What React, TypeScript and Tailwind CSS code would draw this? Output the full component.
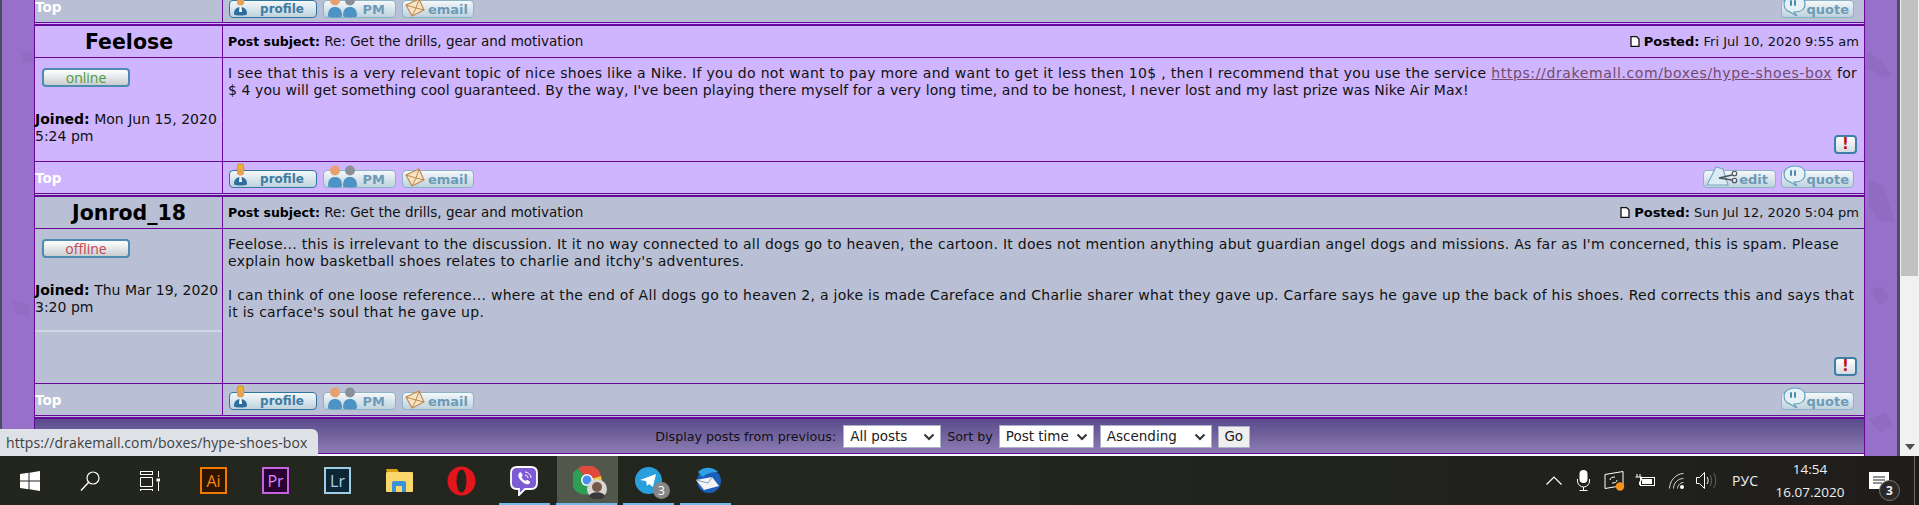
import React from "react";

const BODY = "font-['DejaVu_Sans',sans-serif]";

function ProfileIcon() {
  return (
    <svg width="22" height="25" viewBox="0 0 22 25">
      <path d="M7 1h5l1 5-1 5H7L6 6z" fill="#f0b030" stroke="#b88a20" strokeWidth="0.7" />
      <circle cx="9.5" cy="9" r="3.6" fill="#e9a050" />
      <path d="M3 21c0-5 3-7 6.5-7s6.500 2 6.500 7c0 2-13 2-13 0z" fill="#2f6e9e" />
      <path d="M8.500 14h2l.5 5h-3z" fill="#fff" />
    </svg>
  );
}

function PmIcon() {
  return (
    <svg width="32" height="23" viewBox="0 0 32 23">
      <circle cx="8" cy="5.500" r="5" fill="#e8a070" />
      <path d="M1 21c0-7 3-9 7-9s7 2 7 9c0 2-14 2-14 0z" fill="#4f93c4" />
      <circle cx="23" cy="5.500" r="5" fill="#8a8f98" />
      <path d="M16 21c0-7 3-9 7-9s7 2 7 9c0 2-14 2-14 0z" fill="#4f93c4" />
    </svg>
  );
}

function EmailIcon() {
  return (
    <svg width="22" height="20" viewBox="0 0 22 20">
      <path d="M2 7 15 1l5 11-12 6z" fill="#f6e4c4" stroke="#c08a50" strokeWidth="1.200" />
      <path d="M2 7l10 3 3-9M8 18l4-8 8 2" fill="none" stroke="#c08a50" strokeWidth="1" />
    </svg>
  );
}

function EditIcon() {
  return (
    <svg width="34" height="23" viewBox="0 0 34 23">
      <path d="M1 20 10 2l7 2 5 16z" fill="#dcebf4" stroke="#7ba8c4" strokeWidth="1.200" />
      <path d="M13 13l13-3M13 13l13 2" stroke="#4c5560" strokeWidth="1.400" />
      <circle cx="28.500" cy="8.500" r="2.300" fill="none" stroke="#4c5560" strokeWidth="1.100" />
      <circle cx="28.500" cy="15.500" r="2.300" fill="none" stroke="#4c5560" strokeWidth="1.100" />
    </svg>
  );
}

function QuoteIcon() {
  return (
    <svg width="24" height="23" viewBox="0 0 24 23">
      <path d="M12 1c6 0 10 3 10 8s-4 8-10 8h-1l3 4-7-4c-3-1-6-3-6-8s5-8 11-8z" fill="#e6f1f6" stroke="#5f9ebd" strokeWidth="1.200" />
      <path d="M8 6v4M12 6v4" stroke="#3d7fa5" strokeWidth="1.800" strokeLinecap="round" />
    </svg>
  );
}

function SkinButton({ w, label, icon, left, strong, textClass }: { w: string; label: string; icon: React.ReactNode; left: string; strong?: boolean; textClass: string }) {
  return (
    <span className={`relative flex h-[18px] items-center justify-end rounded-[4px] border bg-gradient-to-b from-[#f4f8fa] to-[#bed3de] ${w} ${strong ? "border-[#31759f]" : "border-[#8db2c6]"}`}>
      <span className={`font-['DejaVu_Sans',sans-serif] font-bold leading-none ${textClass} ${strong ? "text-[12px] text-[#3e7ba1]" : "text-[13px] text-[#6d9ab6]"}`}>{label}</span>
      <span className={`absolute bottom-[-1px] flex ${left}`}>{icon}</span>
    </span>
  );
}

function LeftButtons() {
  return (
    <div className="flex items-end gap-[6px]">
      <SkinButton w="w-[88px]" label="profile" icon={<ProfileIcon />} left="left-[1px]" strong textClass="pr-[12px]" />
      <SkinButton w="w-[73px]" label="PM" icon={<PmIcon />} left="left-[3px]" textClass="pr-[10px]" />
      <SkinButton w="w-[72px]" label="email" icon={<EmailIcon />} left="left-[1px]" textClass="pr-[5px]" />
    </div>
  );
}

function FooterRow({ bg, edit, h, pad, topPad }: { bg: string; edit?: boolean; h: string; pad: string; topPad: string }) {
  return (
    <div className={`grid grid-cols-[188px_1fr] border-b border-[#68059b] ${bg} ${h}`}>
      <div className="flex items-end border-r border-[#68059b]">
        <span className={`${BODY} text-[13.5px] font-bold leading-none text-white ${topPad}`}>Top</span>
      </div>
      <div className={`flex items-end justify-between pl-[6px] pr-[10px] ${pad}`}>
        <LeftButtons />
        <div className="flex items-end gap-[5px]">
          {edit && <SkinButton w="w-[73px]" label="edit" icon={<EditIcon />} left="left-[2px]" textClass="pr-[7px]" />}
          <SkinButton w="w-[73px]" label="quote" icon={<QuoteIcon />} left="left-[1px]" textClass="pr-[4px]" />
        </div>
      </div>
    </div>
  );
}

function Badge({ label, color }: { label: string; color: string }) {
  return (
    <span className="flex h-[19px] w-[88px] items-center justify-center rounded-[4px] border-2 border-[#4d8bb3] bg-gradient-to-b from-[#ffffff] to-[#c9cdd0]">
      <span className={`font-['Open_Sans',sans-serif] text-[14px] leading-none ${color}`}>{label}</span>
    </span>
  );
}

function PostIcon() {
  return (
    <svg width="10" height="11" viewBox="0 0 10 11" className="mr-[4px]">
      <path d="M1 .5h5.500L9 3v7.500H1z" fill="#fff" stroke="#111" strokeWidth="1.300" />
    </svg>
  );
}

function Alert() {
  return (
    <span className="flex h-[19px] w-[23px] items-center justify-center rounded-[4px] border-2 border-[#3f7fa6] bg-gradient-to-b from-[#ffffff] to-[#d2dce2]">
      <span className="font-['DejaVu_Sans',sans-serif] text-[15px] font-bold leading-none text-[#c4120f]">!</span>
    </span>
  );
}

function Post({
  name, bg, badge, badgeColor, joined, time, posted, rule, bodyH, edit, children,
}: {
  name: string; bg: string; badge: string; badgeColor: string; joined: string; time: string; posted: string; rule?: boolean; bodyH: string; edit?: boolean; children: React.ReactNode;
}) {
  return (
    <div className={bg}>
      <div className="h-[1px]" />
      <div className="h-[2px] bg-[#68059b]" />
      <div className="grid h-[32px] grid-cols-[188px_1fr] border-b border-[#68059b]">
        <div className="flex items-center justify-center border-r border-[#68059b] pl-[1px] pt-[1px]">
          <span className={`${BODY} text-[20.5px] font-bold leading-none text-black`}>{name}</span>
        </div>
        <div className={`${BODY} flex min-w-0 items-center justify-between pl-[5px] pr-[5px] text-[13px] text-[#111]`}>
          <span className="text-[13.5px]"><b className="text-[12.5px] text-black">Post subject:</b> Re: Get the drills, gear and motivation</span>
          <span className="flex items-center">
            <PostIcon />
            <span><b className="text-black">Posted:</b> {posted}</span>
          </span>
        </div>
      </div>
      <div className={`grid grid-cols-[188px_1fr] border-b border-[#68059b] ${bodyH}`}>
        <div className="relative border-r border-[#68059b] pt-[10px]">
          <div className="pl-[7px]"><Badge label={badge} color={badgeColor} /></div>
          <p className={`${BODY} mt-[24px] whitespace-nowrap text-[14px] leading-[17px] text-[#111]`}>
            <b className="text-black">Joined:</b> {joined}<br />{time}
          </p>
          {rule && <div className="mt-[14px] h-[2px] bg-[#d0d5e2]" />}
        </div>
        <div className="flex min-w-0 flex-col justify-between pb-[7px] pl-[5px] pr-[7px] pt-[7px]">
          <div className={`${BODY} whitespace-nowrap text-[14px] leading-[17px] text-[#111]`}>{children}</div>
          <div className="flex justify-end"><Alert /></div>
        </div>
      </div>
      <FooterRow bg="" edit={edit} h="h-[32px]" pad="pb-[5px]" topPad="pb-[8px]" />
    </div>
  );
}

function SelectBox({ label, w }: { label: string; w: string }) {
  return (
    <span className={`flex h-[23px] items-center justify-between border border-[#a9b2c6] bg-white pl-[6px] pr-[5px] font-['DejaVu_Sans',sans-serif] text-[13.5px] text-[#222] ${w}`}>
      {label}
      <svg width="12" height="8" viewBox="0 0 12 8"><path d="M1.500 1.500 6 6l4.500-4.500" fill="none" stroke="#333" strokeWidth="2" /></svg>
    </span>
  );
}

function Blobs({ seed }: { seed: number }) {
  return (
    <svg width="32" height="456" viewBox="0 0 32 456" className="absolute left-0 top-0">
      {seed === 0 ? (
        <g fill="#8d66bb" opacity="0.55">
          <path d="M2 52l14 8 10 14-6 4-12-8-8 0z" />
          <path d="M4 180l14 6 12 36-16-2-10-14z" />
          <path d="M6 290l10-4 8 12-10 8z" />
          <path d="M4 420l16-8 8 12-12 8z" />
        </g>
      ) : (
        <g fill="#8d66bb" opacity="0.4">
          <path d="M18 50l14 4v10l-10-2z" />
          <path d="M10 300l16 4 2 12-14-2z" />
        </g>
      )}
    </svg>
  );
}

function Taskbar() {
  return (
    <div className="relative flex h-[49px] items-center bg-gradient-to-r from-[#23261d] via-[#22271f] to-[#1f1d1c] pl-[20px] font-['Open_Sans',sans-serif] text-white">
      <svg width="20" height="20" viewBox="0 0 20 20"><path d="M0 3l8.500-1.200V9.500H0zM9.500 1.700 20 0v9.500H9.500zM0 10.500h8.500v7.700L0 17zM9.500 10.500H20V20L9.500 18.300z" fill="#fff" /></svg>
      <svg width="20" height="20" viewBox="0 0 20 20" className="ml-[40px]"><circle cx="13" cy="7" r="6" fill="none" stroke="#fff" strokeWidth="1.200" /><path d="M8.500 11.500 1 19.500" stroke="#fff" strokeWidth="1.400" /></svg>
      <svg width="20" height="20" viewBox="0 0 20 20" className="ml-[40px]"><path d="M0 .5h13M0 3.500h13M.5 0v3.500M12.500 0v3.500M.5 6.500h12v9H.500zM0 18.500h13M.5 18.500V20M12.500 18.500V20M18.500 0v6M18.500 11v9" fill="none" stroke="#fff" strokeWidth="1" /><rect x="16.500" y="7.500" width="4" height="3" fill="#fff" /></svg>
      <div className="ml-[40px] flex items-center">
        <span className="flex h-[27px] w-[27px] items-center justify-center border-2 border-[#f07a00] bg-[#2f1500] text-[16px] text-[#f58a10]">Ai</span>
        <span className="ml-[35px] flex h-[27px] w-[27px] items-center justify-center border-2 border-[#c663e0] bg-[#2a0033] text-[16px] text-[#d98af0]">Pr</span>
        <span className="ml-[35px] flex h-[27px] w-[27px] items-center justify-center border-2 border-[#9fcde4] bg-[#0d2635] text-[16px] text-[#a9d6ec]">Lr</span>
        <svg width="28" height="24" viewBox="0 0 28 24" className="ml-[35px]">
          <path d="M0 1c0-.6.4-1 1-1h10l2 3H1z" fill="#d8a010" />
          <rect x="0" y="3" width="27" height="20" rx="1" fill="#f9d76c" />
          <path d="M6 23v-9c0-1 .5-2 2-2h10c1.500 0 2 1 2 2v9h-4v-6h-6v6z" fill="#3c92d6" />
        </svg>
        <svg width="29" height="30" viewBox="0 0 29 30" className="ml-[33px]">
          <ellipse cx="14.500" cy="15" rx="14" ry="14.500" fill="#e2161c" />
          <ellipse cx="14.500" cy="15" rx="5" ry="11.500" fill="#23261e" />
        </svg>
        <svg width="28" height="30" viewBox="0 0 28 30" className="ml-[34px]">
          <path d="M7 1h14c4 0 6 2 6 6v10c0 4-2 6-6 6h-6l-6 6v-6H7c-4 0-6-2-6-6V7c0-4 2-6 6-6z" fill="#7d5bd4" stroke="#fff" strokeWidth="1.800" />
          <path d="M9 7c1-1 2-1 2.500 0l1 2c.3 1-.5 1.500-1 2 .8 2 2 3 4 4 .5-.5 1-1.300 2-1l2 1.300c1 .6.500 1.700 0 2.200-1.500 1.500-4 1-7-1.500S7 10 9 7z" fill="#fff" />
          <path d="M15 6c3 0 6 3 6 6M15 9c1.500 0 3 1.500 3 3" fill="none" stroke="#fff" strokeWidth="1" />
        </svg>
      </div>
      <div className="ml-[19px] flex h-[49px] w-[61px] items-center justify-center bg-[#51574a]">
        <span className="relative flex">
          <svg width="30" height="30" viewBox="0 0 30 30">
            <path d="M14 14 5 2.500A14 14 0 0 1 28 10z" fill="#df4a3a" />
            <path d="M14 14l14-4a14 14 0 0 1-12 18z" fill="#f7c92f" />
            <path d="M14 14l2 14A14 14 0 0 1 5 2.500z" fill="#2f9e55" />
            <circle cx="14" cy="14" r="6" fill="#fff" />
            <circle cx="14" cy="14" r="4.500" fill="#4b8ef0" />
          </svg>
          <svg width="20" height="20" viewBox="0 0 20 20" className="absolute bottom-[-3px] right-[-4px]">
            <circle cx="10" cy="10" r="10" fill="#d8d6d2" />
            <circle cx="10" cy="8" r="5" fill="#77594a" />
            <path d="M2 17c2-5 14-5 16 0a10 10 0 0 1-16 0z" fill="#3b3a3a" />
          </svg>
        </span>
      </div>
      <span className="relative ml-[17px] flex">
        <svg width="27" height="27" viewBox="0 0 27 27">
          <circle cx="13.500" cy="13.500" r="13.500" fill="#2a9fdc" />
          <path d="M5 13 21 7l-3 13-4-3-2 2-1-5z" fill="#fff" />
        </svg>
        <span className="absolute bottom-[-5px] right-[-8px] flex h-[17px] w-[17px] items-center justify-center rounded-full bg-[#868686] text-[12px] leading-none text-white">3</span>
      </span>
      <span className="ml-[33px] flex">
        <svg width="26" height="30" viewBox="0 0 26 30">
          <circle cx="14" cy="15" r="12" fill="#1c5fb8" />
          <path d="M3 6c5-5 14-6 20 0-5 0-12 1-15 5z" fill="#2fa0e8" />
          <path d="M1 14l16-3 7 9-15 4z" fill="#f2f4f6" />
          <path d="M1 14l12 3 4-6" fill="none" stroke="#8ea0b4" strokeWidth="1" />
        </svg>
      </span>

      <div className="ml-auto flex items-center">
        <svg width="16" height="9" viewBox="0 0 16 9" className="mr-[15px]"><path d="M.5 8.500 8 1l7.500 7.500" fill="none" stroke="#fff" strokeWidth="1.200" /></svg>
        <svg width="13" height="21" viewBox="0 0 13 21" className="mr-[14px]"><rect x="2.500" y="0" width="8" height="13" rx="4" fill="#fff" /><path d="M.5 9v2a6 6 0 0 0 12 0V9M6.500 17v3M2.500 20.500h8" fill="none" stroke="#fff" strokeWidth="1" /></svg>
        <svg width="21" height="20" viewBox="0 0 21 20" className="mr-[10px]"><path d="M1 3.500 19 .5v14l-18 3z" fill="none" stroke="#fff" strokeWidth="1" /><path d="M6 9c0-2 2-3 5-3M13 9c0 2-2 3-5 3" fill="none" stroke="#fff" strokeWidth="1" /><circle cx="16" cy="15.500" r="4.200" fill="#f7931a" /></svg>
        <svg width="20" height="13" viewBox="0 0 20 13" className="mr-[14px]"><path d="M2 0v3M5 0v3M.5 3h6v3l-2 2v3" fill="none" stroke="#fff" strokeWidth="1" /><rect x="5.500" y="3.500" width="14" height="8" fill="none" stroke="#fff" /><rect x="7" y="5" width="10" height="5" fill="#fff" /></svg>
        <svg width="15" height="16" viewBox="0 0 15 16" className="mr-[12px]"><path d="M.5 15.500C.5 8 7 .5 14.500.5M4.500 15.500c0-5 4-10 10-10M8.500 15.500c0-2 2-6 6-6" fill="none" stroke="#d8d8d8" strokeWidth="1" /><circle cx="13" cy="14" r="2" fill="#fff" /></svg>
        <svg width="21" height="17" viewBox="0 0 21 17" className="mr-[15px]"><path d="M.5 5.500h3L8.500.5v16l-5-5h-3z" fill="none" stroke="#fff" strokeWidth="1" /><path d="M11 5c1.500 2 1.500 5 0 7" fill="none" stroke="#fff" /><path d="M14 3c2 3 2 8 0 11M17.500 1c3 4 3 11 0 15" fill="none" stroke="#666" /></svg>
        <span className="mr-[17px] text-[14px] leading-none text-[#eee]">РУС</span>
        <span className="mr-[24px] flex w-[70px] flex-col items-center gap-[7px] text-[13.5px] leading-[16px] text-[#eee]">
          <span>14:54</span>
          <span>16.07.2020</span>
        </span>
        <span className="relative mr-[30px] flex">
          <svg width="20" height="17" viewBox="0 0 20 17"><path d="M0 0h20v17H0z" fill="#fff" /><path d="M4 5h12M4 8h12M4 11h9" stroke="#222" /></svg>
          <span className="absolute bottom-[-12px] right-[-11px] flex h-[21px] w-[21px] items-center justify-center rounded-full border border-[#777] bg-[#2a2928] text-[12px] font-bold leading-none text-[#eee]">3</span>
        </span>
      </div>
      <div className="absolute bottom-0 right-[4px] top-0 w-[1px] bg-[#6a6a6a]" />
      <div className="absolute bottom-0 left-[499px] h-[2px] w-[51px] bg-[#76b9ed]" />
      <div className="absolute bottom-0 left-[556px] h-[2px] w-[61px] bg-[#76b9ed]" />
      <div className="absolute bottom-0 left-[623px] h-[2px] w-[51px] bg-[#76b9ed]" />
      <div className="absolute bottom-0 left-[680px] h-[2px] w-[51px] bg-[#76b9ed]" />
    </div>
  );
}

export default function App() {
  return (
    <div className="relative h-[505px] w-full overflow-hidden">
      <div className="flex h-[456px]">
        <div className="w-[2px] bg-[#474d63]" />
        <div className="relative w-[32px] overflow-hidden bg-[#9670c9]"><Blobs seed={1} /></div>
        <main className="flex h-[456px] w-[1831px] flex-col border-x border-[#68059b]">
          <div className="h-[23px] overflow-hidden bg-[#b9c0d6]">
            <FooterRow bg="" h="h-[23px]" pad="pb-[4px]" topPad="pb-[8px]" />
          </div>
          <Post name="Feelose" bg="bg-[#ceb5fd]" badge="online" badgeColor="text-[#4e9a3e]" joined="Mon Jun 15, 2020" time="5:24 pm" posted="Fri Jul 10, 2020 9:55 am" bodyH="h-[104px]" edit>
            <span className="tracking-[0.306px]">I see that this is a very relevant topic of nice shoes like a Nike. If you do not want to pay more and want to get it less then 10$ , then I recommend that you use the service </span><a className="tracking-[0.62px] text-[#734b6f] underline">https://drakemall.com/boxes/hype-shoes-box</a><span className="tracking-[0.306px]"> for</span><br />
            <span className="tracking-[0.08px]">$ 4 you will get something cool guaranteed. By the way, I've been playing there myself for a very long time, and to be honest, I never lost and my last prize was Nike Air Max!</span>
          </Post>
          <Post name="Jonrod_18" bg="bg-[#b9c0d6]" badge="offline" badgeColor="text-[#c0484e]" joined="Thu Mar 19, 2020" time="3:20 pm" posted="Sun Jul 12, 2020 5:04 pm" rule bodyH="h-[155px]">
            <span className="tracking-[0.278px]">Feelose... this is irrelevant to the discussion. It it no way connected to all dogs go to heaven, the cartoon. It does not mention anything abut guardian angel dogs and missions. As far as I'm concerned, this is spam. Please<br />
            explain how basketball shoes relates to charlie and itchy's adventures.<br /><br />
            I can think of one loose reference... where at the end of All dogs go to heaven 2, a joke is made Careface and Charlie sharer what they gave up. Carfare says he gave up the back of his shoes. Red corrects this and says that<br />
            it is carface's soul that he gave up.</span>
          </Post>
          <div className="flex h-[38px] flex-col bg-[#9670c9]">
            <div className="h-[1px] bg-[#b9c0d6]" />
            <div className="h-[2px] bg-[#68059b]" />
            <div className={`${BODY} flex h-[35px] items-center justify-center border-b border-[#68059b] bg-gradient-to-b from-[#5a4a8c] to-[#8c7eb2] pl-[6px] pt-[1px] text-[12.7px] text-[#111]`}>
              <span className="mr-[7px]">Display posts from previous:</span>
              <SelectBox label="All posts" w="w-[98px]" />
              <span className="mx-[6px]">Sort by</span>
              <SelectBox label="Post time" w="w-[95px]" />
              <span className="ml-[6px]"><SelectBox label="Ascending" w="w-[112px]" /></span>
              <span className="ml-[6px] flex h-[22px] w-[32px] items-center justify-center border border-[#a9b2c6] bg-[#efefef] text-[13.5px] text-[#222]">Go</span>
            </div>
          </div>
        </main>
        <div className="relative w-[32px] overflow-hidden bg-[#9670c9]"><Blobs seed={0} /></div>
        <div className="w-[3px] bg-[#474d63]" />
        <div className="flex flex-1 flex-col bg-[#f1f1f1] pl-[1px] pr-[1px]">
          <div className="h-[276px] bg-[#c1c1c1]" />
          <div className="mt-auto flex justify-center pb-[6px]">
            <svg width="10" height="6" viewBox="0 0 10 6"><path d="M0 0h10L5 6z" fill="#505050" /></svg>
          </div>
        </div>
      </div>
      <Taskbar />
      <div className="absolute left-0 top-[429px] flex h-[27px] w-[318px] items-center rounded-tr-[6px] bg-[#dee1e6] pl-[6px] font-['Open_Sans',sans-serif] text-[14px] tracking-[0.1px] text-[#3c4043]">
        https://drakemall.com/boxes/hype-shoes-box
      </div>
    </div>
  );
}
